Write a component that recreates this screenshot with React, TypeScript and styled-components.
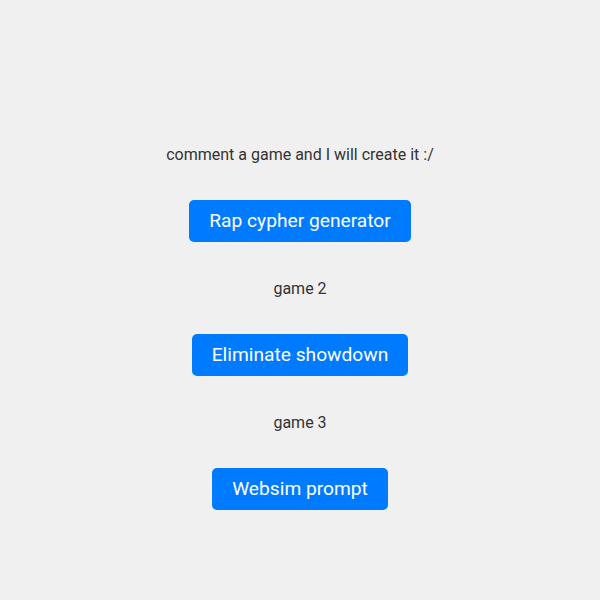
import React from "react";
import styled, { createGlobalStyle } from "styled-components";

const GlobalStyle = createGlobalStyle`
  html, body {
    margin: 0;
    padding: 0;
    background: #f0f0f0;
  }
  body {
    font-family: Roboto, "Liberation Sans", Arial, sans-serif;
    color: #333333;
  }
`;

const Page = styled.main`
  min-height: 600px;
  box-sizing: border-box;
  padding-top: 145px;
  display: flex;
  flex-direction: column;
  align-items: center;
  gap: 37px;
`;

const GameBlock = styled.section`
  display: flex;
  flex-direction: column;
  align-items: center;
  gap: 35px;
`;

const Label = styled.p`
  margin: 0;
  font-size: 16px;
  line-height: 20px;
  color: #333333;
`;

const GameButton = styled.button`
  font-family: Roboto, "Liberation Sans", Arial, sans-serif;
  font-size: 19.2px;
  line-height: 22px;
  padding: 10px 20px;
  border: none;
  border-radius: 5px;
  background: #007bff;
  color: #ffffff;
  cursor: pointer;
`;

const games = [
  { label: "comment a game and I will create it :/", title: "Rap cypher generator" },
  { label: "game 2", title: "Eliminate showdown" },
  { label: "game 3", title: "Websim prompt" },
];

export default function App() {
  return (
    <>
      <GlobalStyle />
      <Page>
        {games.map((g) => (
          <GameBlock key={g.title}>
            <Label>{g.label}</Label>
            <GameButton>{g.title}</GameButton>
          </GameBlock>
        ))}
      </Page>
    </>
  );
}
